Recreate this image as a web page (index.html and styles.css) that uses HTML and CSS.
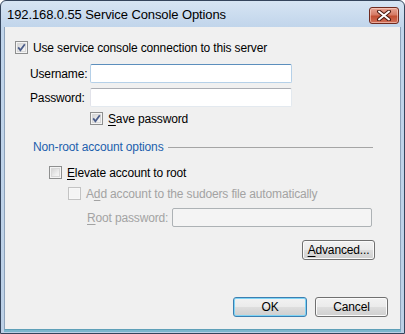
FILE: index.html
```html
<!DOCTYPE html>
<html>
<head>
<meta charset="utf-8">
<link rel="stylesheet" href="styles.css">
</head>
<body>
<div class="window">
  <div class="titlebar">
    <span class="title">192.168.0.55 Service Console Options</span>
    <span class="close">
      <svg width="16" height="11" viewBox="0 0 16 11">
        <path d="M3 1.5 L13 9.5 M13 1.5 L3 9.5" stroke="#4a1a12" stroke-width="4" stroke-linecap="round"/>
        <path d="M3 1.5 L13 9.5 M13 1.5 L3 9.5" stroke="#ffffff" stroke-width="2" stroke-linecap="round"/>
      </svg>
    </span>
  </div>
  <div class="client">
    <div class="row chk-row r-use">
      <span class="cb"><svg width="13" height="13" viewBox="0 0 13 13"><path d="M3.2 6.4 L5.4 9.2 L9.8 3.2" fill="none" stroke="#4b5d8a" stroke-width="1.8"/></svg></span>
      <span class="lbl">Use service console connection to this server</span>
    </div>
    <div class="row field r-user">
      <span class="flabel">Username:</span>
      <span class="tb focus"></span>
    </div>
    <div class="row field r-pass">
      <span class="flabel">Password:</span>
      <span class="tb"></span>
    </div>
    <div class="row chk-row r-save">
      <span class="cb"><svg width="13" height="13" viewBox="0 0 13 13"><path d="M3.2 6.4 L5.4 9.2 L9.8 3.2" fill="none" stroke="#4b5d8a" stroke-width="1.8"/></svg></span>
      <span class="lbl"><u>S</u>ave password</span>
    </div>
    <div class="row group r-group">
      <span class="gtitle">Non-root account options</span>
      <span class="gline"></span>
    </div>
    <div class="row chk-row r-elev">
      <span class="cb"></span>
      <span class="lbl"><u>E</u>levate account to root</span>
    </div>
    <div class="row chk-row r-add disabled">
      <span class="cb"></span>
      <span class="lbl">A<u>d</u>d account to the sudoers file automatically</span>
    </div>
    <div class="row field r-root disabled">
      <span class="flabel"><u>R</u>oot password:</span>
      <span class="tb"></span>
    </div>
    <div class="row r-adv">
      <span class="btn btn-adv"><u>A</u>dvanced...</span>
    </div>
    <div class="spacer"></div>
    <div class="row r-bottom">
      <span class="btn btn-ok default">OK</span>
      <span class="btn btn-cancel">Cancel</span>
    </div>
  </div>
</div>
</body>
</html>
```

FILE: styles.css
```css
html, body {
  margin: 0;
  padding: 0;
  background: #ffffff;
}
body {
  width: 405px;
  height: 334px;
  overflow: hidden;
  font-family: "Liberation Sans", Arial, sans-serif;
  font-size: 12px;
  letter-spacing: -0.15px;
  color: #000;
}
.window {
  width: 405px;
  height: 334px;
  box-sizing: border-box;
  border: 1px solid #34445c;
  border-radius: 6px 6px 0 0;
  background: linear-gradient(#d6e4f3 0px, #c1d5eb 26px, #bcd0e6 100%);
  display: flex;
  flex-direction: column;
}
.titlebar {
  height: 26px;
  flex: none;
  display: flex;
  align-items: center;
  padding-left: 6px;
  padding-right: 5px;
  box-sizing: border-box;
}
.title {
  font-size: 13px;
  letter-spacing: -0.1px;
  color: #000;
  flex: 1;
  margin-top: 1px;
}
.close {
  width: 30px;
  height: 17px;
  box-sizing: border-box;
  border: 1px solid #6f2a1f;
  border-radius: 3px;
  background: linear-gradient(#e7a595 0%, #d67b66 45%, #c24e32 55%, #d0705a 100%);
  box-shadow: inset 0 0 0 1px rgba(255, 220, 210, 0.55);
  display: flex;
  align-items: center;
  justify-content: center;
  margin-top: 3px;
}
.client {
  flex: 1;
  margin: 0 3px 3px 3px;
  border: 1px solid #8da2ba;
  border-top: none;
  background: #f0f0f0;
  display: flex;
  flex-direction: column;
  padding-top: 12px;
  padding-bottom: 12px;
  box-sizing: border-box;
  border-bottom: 1px solid #5e9fb8;
  box-shadow: 0 2px 0 #7bb6cc;
}
.row {
  display: flex;
  align-items: center;
  flex: none;
}
.chk-row { height: 15px; }
.field { height: 19px; }
.lbl { margin-left: 5px; white-space: nowrap; }
.cb {
  width: 13px;
  height: 13px;
  box-sizing: border-box;
  border: 1px solid #8e8f8f;
  background: linear-gradient(135deg, #cbcbcb 0%, #eeeeee 60%, #fbfbfb 100%);
  box-shadow: inset 0 0 0 1px #f4f4f4, inset 0 0 0 2px #d8d8d8;
  position: relative;
  flex: none;
}
.cb svg {
  position: absolute;
  left: -1px;
  top: -1px;
}
.disabled { color: #a3a3a3; }
.disabled .cb {
  border-color: #c3c3c3;
  background: #f4f4f4;
  box-shadow: inset 0 0 0 1px #f7f7f7;
}
.tb {
  display: block;
  height: 19px;
  box-sizing: border-box;
  background: #ffffff;
  border: 1px solid;
  border-color: #abadb3 #e3e9ef #e3e9ef #e2e3ea;
  border-radius: 2px;
}
.tb.focus {
  border-color: #5c8fbd #b5d0e8 #b5d0e8 #b5d0e8;
}
.flabel { white-space: nowrap; flex: none; }

.r-use { margin-top: 1px; margin-left: 10px; }
.r-user { margin-top: 9px; margin-left: 25px; }
.r-user .flabel, .r-pass .flabel { width: 60px; }
.r-user .tb, .r-pass .tb { width: 202px; }
.r-pass { margin-top: 5px; margin-left: 25px; }
.r-save { margin-top: 4px; margin-left: 85px; }
.group { height: 15px; margin-top: 13px; margin-left: 28px; margin-right: 27px; }
.gtitle { color: #1d5fad; white-space: nowrap; }
.gline { flex: 1; height: 1px; background: #a5a5a5; margin-left: 5px; margin-top: 1px; }
.r-elev { margin-top: 11px; margin-left: 44px; }
.r-add { margin-top: 6px; margin-left: 63px; }
.r-root { margin-top: 7px; margin-left: 82px; }
.r-root .flabel { width: 85px; }
.r-root .tb { width: 200px; background: #f4f4f4; border-color: #adb2b5; }
.r-adv { margin-top: 13px; justify-content: flex-end; margin-right: 25px; }
.spacer { flex: 1; }
.r-bottom { justify-content: flex-end; margin-right: 12px; gap: 8px; }

.btn {
  height: 20px;
  box-sizing: border-box;
  border: 1px solid #707070;
  border-radius: 3px;
  background: linear-gradient(#f2f2f2 0%, #ebebeb 48%, #dddddd 52%, #cfcfcf 100%);
  box-shadow: inset 0 0 0 1px #fbfbfb;
  display: flex;
  align-items: center;
  justify-content: center;
  white-space: nowrap;
}
.btn-adv { width: 73px; }
.btn-ok { width: 74px; }
.btn-cancel { width: 73px; }
.btn.default {
  border-color: #3c7fb1;
  box-shadow: inset 0 0 0 1px #7fd4f5;
}
u { text-decoration: underline; text-underline-offset: 2px; }
```
